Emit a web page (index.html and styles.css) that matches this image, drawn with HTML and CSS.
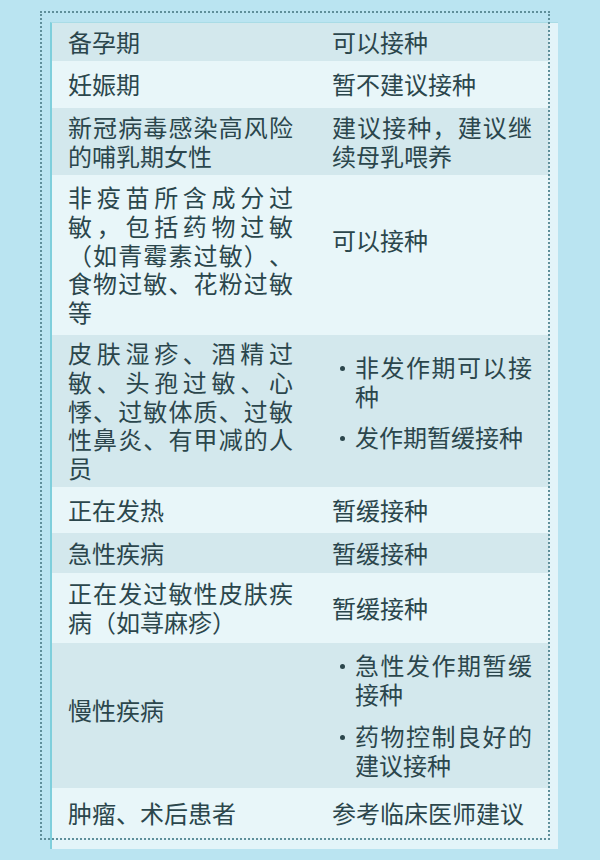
FILE: index.html
```html
<!DOCTYPE html>
<html lang="zh-CN">
<head>
<meta charset="utf-8">
<title>接种建议</title>
<link rel="stylesheet" href="styles.css">
</head>
<body>
<div class="panel">
  <table class="advice">
    <colgroup><col class="col-who"><col class="col-what"></colgroup>
    <tbody>
      <tr class="row dark h38"><td>备孕期</td><td>可以接种</td></tr>
      <tr class="row light h47"><td>妊娠期</td><td>暂不建议接种</td></tr>
      <tr class="row dark h67"><td>新冠病毒感染高风险的哺乳期女性</td><td>建议接种，建议继续母乳喂养</td></tr>
      <tr class="row light h160"><td>非疫苗所含成分过敏，包括药物过敏（如青霉素过敏）、食物过敏、花粉过敏等</td><td class="lift-lg">可以接种</td></tr>
      <tr class="row dark h152"><td>皮肤湿疹、酒精过敏、头孢过敏、心悸、过敏体质、过敏性鼻炎、有甲减的人员</td><td class="lift-lg2">
        <ul class="points">
          <li><span>非发作期可以接种</span></li>
          <li><span>发作期暂缓接种</span></li>
        </ul></td></tr>
      <tr class="row light h46"><td>正在发热</td><td>暂缓接种</td></tr>
      <tr class="row dark h40"><td>急性疾病</td><td>暂缓接种</td></tr>
      <tr class="row light h70"><td>正在发过敏性皮肤疾病（如荨麻疹）</td><td>暂缓接种</td></tr>
      <tr class="row dark h145"><td class="lift-sm">慢性疾病</td><td>
        <ul class="points">
          <li><span>急性发作期暂缓接种</span></li>
          <li><span>药物控制良好的建议接种</span></li>
        </ul></td></tr>
      <tr class="row light h50"><td>肿瘤、术后患者</td><td>参考临床医师建议</td></tr>
    </tbody>
  </table>
</div>
</body>
</html>
```

FILE: styles.css
```css
* { box-sizing: border-box; }

html, body {
  margin: 0;
  padding: 0;
}

body {
  background: #bae4f1;
  width: 600px;
  height: 860px;
  overflow: hidden;
  font-family: "Noto Sans CJK SC", "Noto Sans", sans-serif;
  color: #2b464c;
  text-spacing-trim: space-all;
}

.panel {
  position: relative;
  margin: 22px 42px 0 50px;
  padding: 0 9px 11px 0;
  background: #e3f4f9;
  border-left: 2px solid #7fcfdc;
  border-top: 1px solid #a9dce6;
}

.panel::before {
  content: "";
  position: absolute;
  top: -12px;
  left: -12px;
  right: 8px;
  bottom: 9px;
  border: 2px dotted #5f8f9a;
  pointer-events: none;
  z-index: 2;
}

.advice {
  width: 497px;
  table-layout: fixed;
  border-collapse: collapse;
  border-spacing: 0;
  font-size: 24px;
  line-height: 28.8px;
}

.col-who { width: 262px; }
.col-what { width: 235px; }

.advice td {
  padding: 0 21px 0 16px;
  vertical-align: middle;
  text-align: justify;
}

.advice td + td {
  padding: 0 17px 0 18px;
}

.row.dark { background: #d3e8ed; }
.row.light { background: #e8f6f9; }

.h38 { height: 38px; }
.h47 { height: 47px; }
.h67 { height: 67px; }
.h160 { height: 160px; }
.h152 { height: 152px; }
.h46 { height: 46px; }
.h40 { height: 40px; }
.h70 { height: 70px; }
.h145 { height: 145px; }
.h50 { height: 50px; }

.advice td.lift-lg { padding-bottom: 30px; }
.advice td.lift-lg2 { padding-bottom: 17px; }
.advice td.lift-sm { padding-bottom: 11px; }

.points {
  list-style: none;
  margin: 0;
  padding: 0;
}

.points li {
  display: flex;
  align-items: flex-start;
}

.points li + li { margin-top: 13px; }

.points li::before {
  content: "";
  flex: none;
  width: 5px;
  height: 5px;
  border-radius: 50%;
  background: currentColor;
  margin: 13px 10px 0 8px;
}

.points li span {
  flex: 1;
  text-align: justify;
}
```
